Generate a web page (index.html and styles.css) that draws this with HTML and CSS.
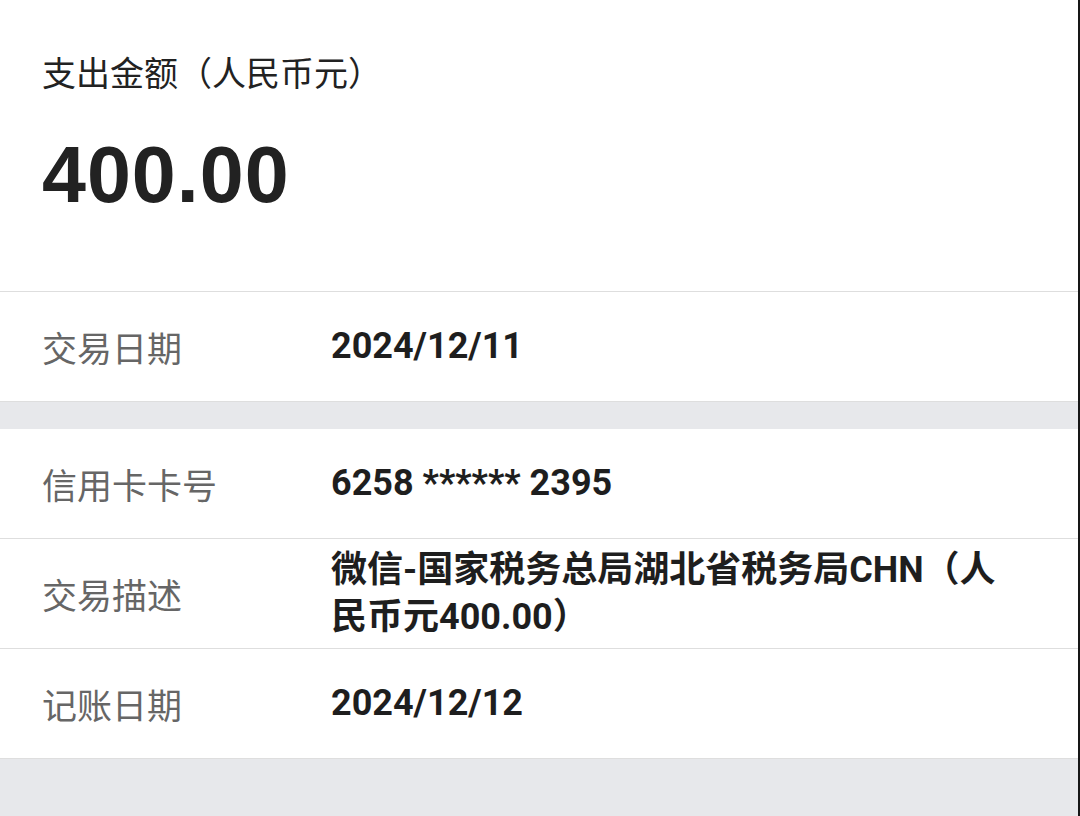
FILE: index.html
```html
<!DOCTYPE html>
<html>
<head>
    <meta charset="utf-8">
    <title>交易详情</title>
    <link rel="stylesheet" href="styles.css">
</head>
<body>

    <div class="card">
        <div class="summary">
            <div class="summary-title">支出金额（人民币元）</div>
            <div class="amount">400.00</div>
        </div>
        <div class="row">
            <div class="label">交易日期</div>
            <div class="value">2024/12/11</div>
        </div>
    </div>

    <div class="card">
        <div class="row">
            <div class="label">信用卡卡号</div>
            <div class="value">6258 ****** 2395</div>
        </div>
        <div class="row">
            <div class="label">交易描述</div>
            <div class="value">微信-国家税务总局湖北省税务局CHN（人民币元400.00）</div>
        </div>
        <div class="row">
            <div class="label">记账日期</div>
            <div class="value">2024/12/12</div>
        </div>
    </div>

</body>
</html>
```

FILE: styles.css
```css
html, body {
    margin: 0;
    padding: 0;
}

body {
    font-family: 'Noto Sans CJK SC', sans-serif;
    background-color: #e7e8eb;
    min-height: 100vh;
    box-sizing: border-box;
    border-right: 2px solid #161616;
}

.card {
    background-color: #fff;
    margin-bottom: 27px;
}

.summary {
    height: 292px;
    box-sizing: border-box;
    padding: 50px 42px 0;
    border-bottom: 1px solid #dedede;
}

.summary-title {
    font-size: 34px;
    line-height: 44px;
    color: #222;
}

.amount {
    margin-top: 36px;
    font-family: 'Liberation Sans', sans-serif;
    font-weight: bold;
    font-size: 79px;
    line-height: 90px;
    letter-spacing: 1px;
    color: #222;
}

.row {
    display: flex;
    align-items: center;
    min-height: 109px;
    padding: 0 60px 0 42px;
    border-bottom: 1px solid #dedede;
}

.label {
    width: 289px;
    flex-shrink: 0;
    font-size: 35px;
    color: #666;
}

.value {
    flex: 1;
    font-family: Roboto, 'Noto Sans CJK SC', sans-serif;
    font-weight: bold;
    font-size: 36px;
    line-height: 47px;
    color: #1e1e1e;
}
```
